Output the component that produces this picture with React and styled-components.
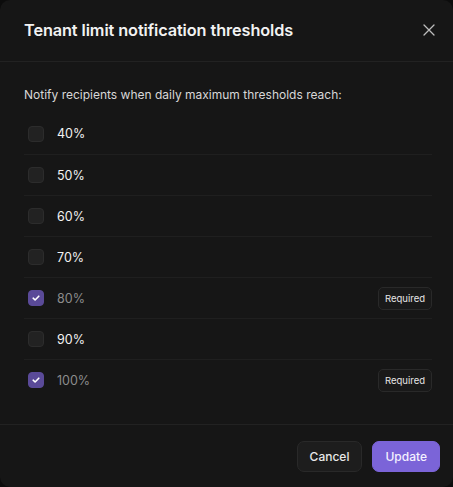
import React, { useState } from "react";
import styled, { createGlobalStyle } from "styled-components";

const Global = createGlobalStyle`
  html, body { margin: 0; padding: 0; background: #0c0c0c; }
  body { font-family: Inter, "Noto Sans", sans-serif; -webkit-font-smoothing: antialiased; }
  * { box-sizing: border-box; }
`;

const Dialog = styled.div`
  width: 453px;
  height: 487px;
  background: #161616;
  border-radius: 10px;
  display: flex;
  flex-direction: column;
  overflow: hidden;
`;

const Header = styled.div`
  height: 62px;
  display: flex;
  align-items: center;
  justify-content: space-between;
  padding: 0 13px 2px 24px;
  border-bottom: 1px solid #222;
`;

const Title = styled.h2`
  margin: 0;
  font-size: 16.3px;
  font-weight: 600;
  color: #f2f2f2;
  letter-spacing: -0.1px;
`;

const CloseBtn = styled.button`
  background: none;
  border: none;
  padding: 4px;
  color: #bdbdbd;
  display: flex;
  cursor: pointer;
`;

const Body = styled.div`
  padding: 24px 21px 24px 24px;
  flex: 1;
`;

const Intro = styled.p`
  margin: 0 0 9px;
  font-size: 12px;
  color: #d8d8d8;
  line-height: 18px;
`;

const List = styled.div`
  display: flex;
  flex-direction: column;
`;

const Row = styled.label`
  height: 41px;
  display: flex;
  align-items: center;
  gap: 13px;
  padding-left: 4px;
  border-top: ${(p) => (p.$first ? "none" : "1px solid #1f1f1f")};
  cursor: pointer;
`;

const Box = styled.span`
  width: 16px;
  height: 16px;
  border-radius: 4px;
  flex: none;
  display: flex;
  align-items: center;
  justify-content: center;
  background: ${(p) => (p.$checked ? "#5a4a98" : "#222")};
  border: 1px solid ${(p) => (p.$checked ? "#5a4a98" : "#2c2c2c")};
`;

const Label = styled.span`
  flex: 1;
  font-size: 12.5px;
  font-weight: 400;
  color: ${(p) => (p.$muted ? "#8c8c8c" : "#f2f2f2")};
`;

const Badge = styled.span`
  height: 23px;
  padding: 0 6px;
  display: flex;
  align-items: center;
  font-size: 9.5px;
  color: #e6e6e6;
  background: #191919;
  border: 1px solid #292929;
  border-radius: 5px;
`;

const Footer = styled.div`
  height: 63px;
  border-top: 1px solid #222;
  display: flex;
  justify-content: flex-end;
  align-items: flex-start;
  gap: 10px;
  padding: 16px 13px 0 0;
`;

const Button = styled.button`
  height: 31px;
  padding: 0 12px;
  border-radius: 7px;
  font-family: inherit;
  font-size: 12px;
  font-weight: 500;
  cursor: pointer;
  color: ${(p) => (p.$primary ? "#f4f1ff" : "#e8e8e8")};
  background: ${(p) => (p.$primary ? "#7b64d8" : "#1d1d1d")};
  border: 1px solid ${(p) => (p.$primary ? "#7b64d8" : "#292929")};
`;

const items = [
  { v: 40 },
  { v: 50 },
  { v: 60 },
  { v: 70 },
  { v: 80, req: true },
  { v: 90 },
  { v: 100, req: true },
];

const Check = () => (
  <svg width="10" height="10" viewBox="0 0 10 10" fill="none">
    <path d="M2.2 5.2 L4.1 7 L7.8 3.2" stroke="#fff" strokeWidth="1.6" strokeLinecap="round" strokeLinejoin="round" />
  </svg>
);

export default function App() {
  const [checked] = useState(() => new Set([80, 100]));
  return (
    <>
      <Global />
      <Dialog>
        <Header>
          <Title>Tenant limit notification thresholds</Title>
          <CloseBtn aria-label="Close">
            <svg width="14" height="14" viewBox="0 0 14 14" fill="none">
              <path d="M2 2 L12 12 M12 2 L2 12" stroke="currentColor" strokeWidth="1.3" strokeLinecap="round" />
            </svg>
          </CloseBtn>
        </Header>
        <Body>
          <Intro>Notify recipients when daily maximum thresholds reach:</Intro>
          <List>
            {items.map((it, i) => {
              const on = checked.has(it.v);
              return (
                <Row key={it.v} $first={i === 0}>
                  <Box $checked={on}>{on && <Check />}</Box>
                  <Label $muted={it.req}>{it.v}%</Label>
                  {it.req && <Badge>Required</Badge>}
                </Row>
              );
            })}
          </List>
        </Body>
        <Footer>
          <Button>Cancel</Button>
          <Button $primary>Update</Button>
        </Footer>
      </Dialog>
    </>
  );
}
